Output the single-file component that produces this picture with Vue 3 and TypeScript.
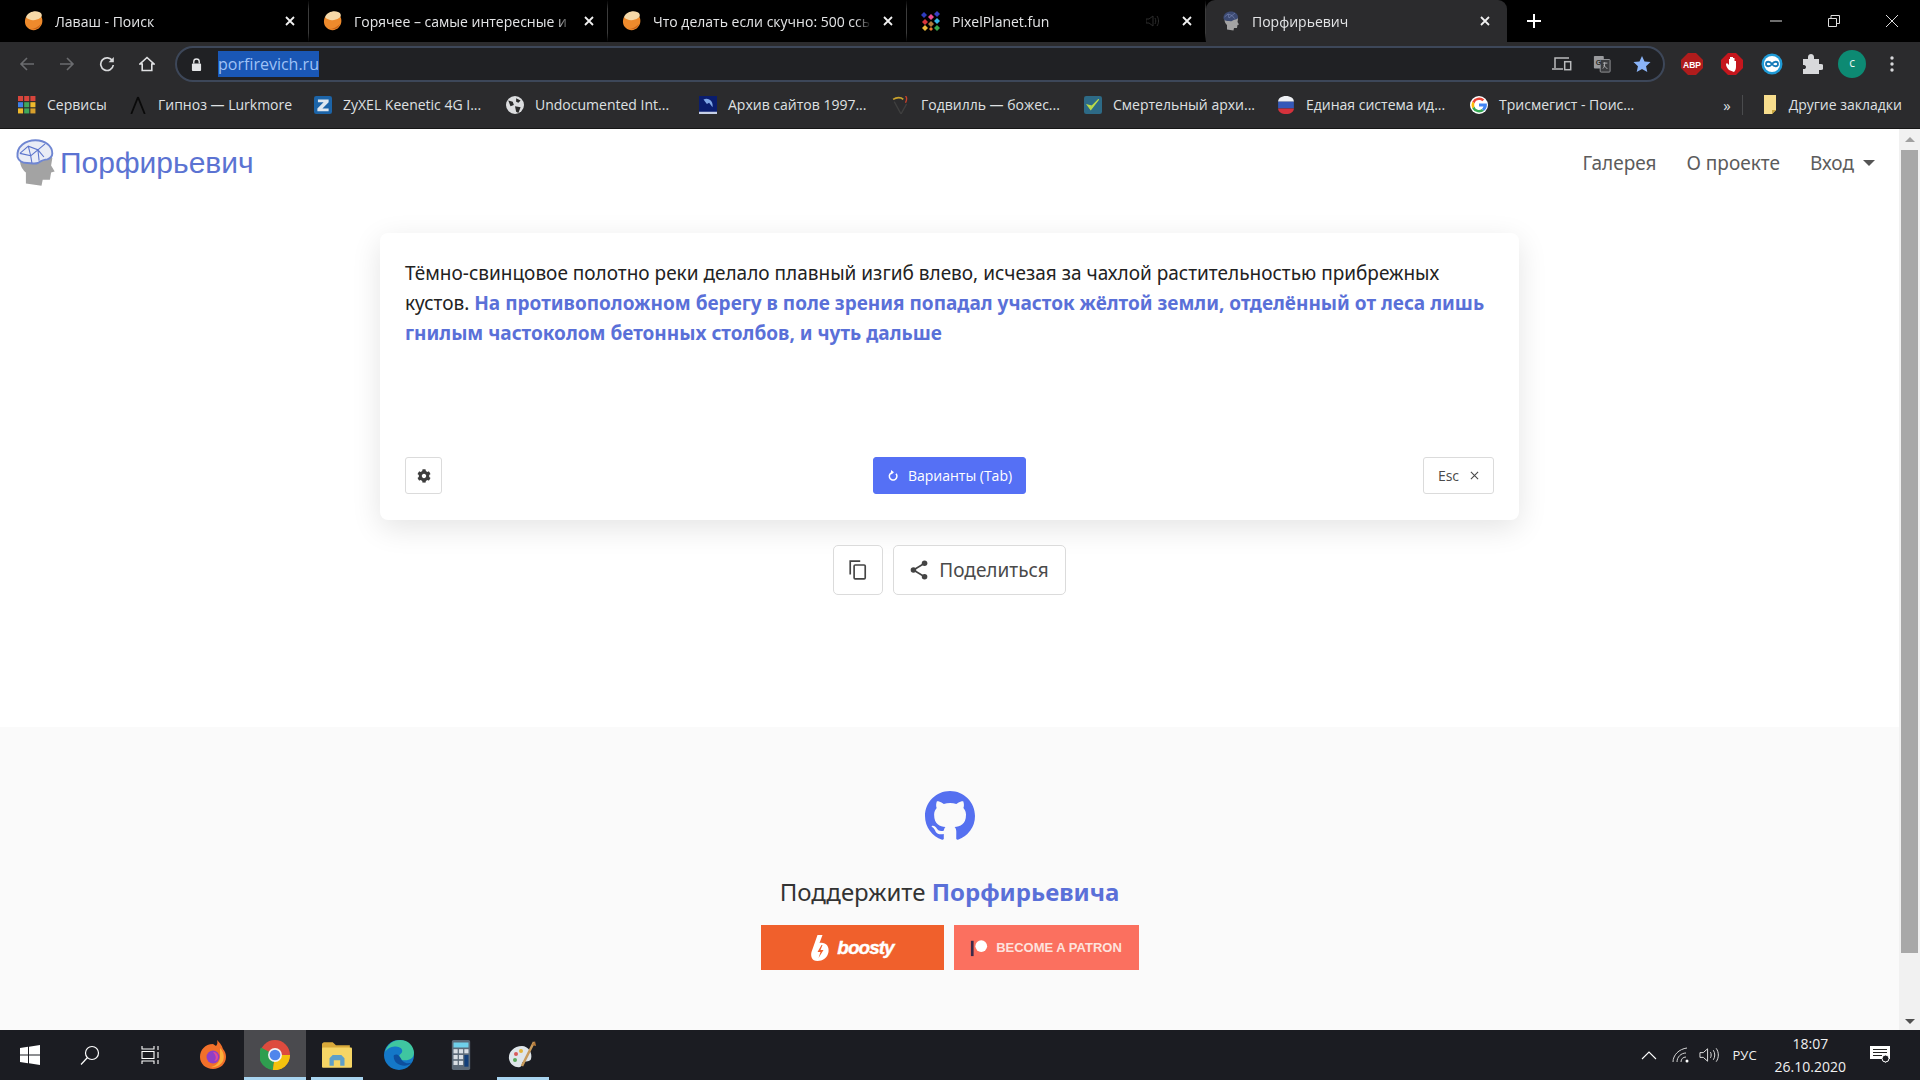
<template>
  <div class="screen">
    <svg class="defs" aria-hidden="true">
      <symbol id="lavash" viewBox="0 0 20 20">
        <path d="M2 6c-2 4-1 9 2 11 3 3 9 3 12-1 3-3 3-8 1-11z" fill="#ee8a2c" />
        <path d="M2 6C4 1 11-1 15 1c3 1 4 4 1 6-4 3-11 3-14-1z" fill="#f6d9a8" />
        <path d="M6 18c4 1 9 0 11-5-3 3-7 5-11 5z" fill="#c9641a" />
      </symbol>
      <symbol id="head" viewBox="1 0 34 40">
        <path d="M5 17c0 6 3 9 5 11v9l13 2 1-5h6l1-6 3-1-3-5 1-6C31 6 6 6 5 17z" fill="#a3a3a3" />
        <path d="M3 15C2 6 10 1 18 1c8 0 14 5 14 11 0 3-2 4-4 5-3 0-5 1-8 3-3 1-6 0-9 0-4 0-7-2-8-5z" fill="#e9ecf6" stroke="#6f86d2" stroke-width="1.6" />
        <path d="M5 12l7-6 8 3 6-5M12 6l2 8 6-5 5 6M5 12l9 2 1 6M20 9l1 9" fill="none" stroke="#5c74cc" stroke-width=".9" />
      </symbol>
      <symbol id="head-dark" viewBox="1 0 34 40">
        <path d="M5 17c0 6 3 9 5 11v9l13 2 1-5h6l1-6 3-1-3-5 1-6C31 6 6 6 5 17z" fill="#a3a3a3" />
        <path d="M3 15C2 6 10 1 18 1c8 0 14 5 14 11 0 3-2 4-4 5-3 0-5 1-8 3-3 1-6 0-9 0-4 0-7-2-8-5z" fill="#3c4a72" />
        <path d="M5 12l7-6 8 3 6-5M12 6l2 8 6-5 5 6" fill="none" stroke="#7d8cb8" stroke-width="1.200" />
      </symbol>
      <symbol id="pixel" viewBox="0 0 20 20">
        <path d="M3 1l3 3-3 3-3-3z" fill="#2e3bbd" />
        <path d="M10 3l3 3-3 3-3-3z" fill="#ef4a8f" />
        <path d="M16 0l3 3-3 3-3-3z" fill="#3a3fc4" />
        <path d="M4 8l3 3-3 3-3-3z" fill="#d8353b" />
        <path d="M16 7l3 3-3 3-3-3z" fill="#37b6e8" />
        <path d="M10 10l3 3-3 3-3-3z" fill="#b07a3a" />
        <path d="M4 14l3 3-3 3-3-3z" fill="#eab93b" />
        <path d="M16 14l3 3-3 3-3-3z" fill="#37a84b" />
        <path d="M10 16l2 2-2 2-2-2z" fill="#e87a2b" />
      </symbol>
      <symbol id="gear" viewBox="0 0 512 512">
        <path d="M487 316l-42-25c4-23 4-47 0-70l42-25c5-3 7-9 5-14-11-35-30-67-54-93-4-4-10-5-15-2l-42 24c-18-15-38-27-60-35V27c0-6-4-11-9-12-37-8-74-8-110 0-5 1-9 6-9 12v49c-22 8-42 20-60 35L91 87c-5-3-11-2-15 2-24 26-43 58-54 93-2 5 0 11 5 14l42 25c-4 23-4 47 0 70l-42 25c-5 3-7 9-5 14 11 35 30 67 54 93 4 4 10 5 15 2l42-24c18 15 38 27 60 35v49c0 6 4 11 9 12 37 8 74 8 110 0 5-1 9-6 9-12v-49c22-8 42-20 60-35l42 24c5 3 11 2 15-2 24-26 43-58 54-93 2-5 0-11-5-14zM256 336c-44 0-80-36-80-80s36-80 80-80 80 36 80 80-36 80-80 80z" fill="currentColor" />
      </symbol>
    </svg>

    <div class="tabbar">
      <div v-for="tab in tabs" :key="tab.title" :class="['tab', tab.active && 'active']">
        <svg class="favicon"><use :href="'#' + tab.icon" /></svg>
        <span class="tab-title">{{ tab.title }}</span>
        <svg v-if="tab.muted" class="tab-audio" viewBox="0 0 14 12"><path d="M0 4h3l4-3v10L3 8H0zM9 3c1 2 1 4 0 6M11 1c2 3 2 7 0 10" fill="none" stroke="#2c2c2c" /></svg>
        <svg class="tab-close" viewBox="0 0 10 10"><path d="M1 1l8 8M9 1l-8 8" stroke="currentColor" stroke-width="1.8" /></svg>
      </div>
      <svg class="new-tab" viewBox="0 0 14 14"><path d="M7 0v14M0 7h14" stroke="#fff" stroke-width="2" /></svg>
      <div class="win-controls">
        <svg viewBox="0 0 12 12"><path d="M0 6h12" stroke="#ddd" /></svg>
        <svg viewBox="0 0 12 12"><path d="M.5 3.500h8v8h-8zM3 3V.5h8.500v8H9" fill="none" stroke="#ddd" /></svg>
        <svg viewBox="0 0 12 12"><path d="M0 0l12 12M12 0L0 12" stroke="#ddd" /></svg>
      </div>
    </div>

    <div class="toolbar">
      <svg class="tb-icon" viewBox="0 0 16 16"><path d="M15 8H2M8 2L2 8l6 6" fill="none" stroke="#6b6c6f" stroke-width="1.600" /></svg>
      <svg class="tb-icon" viewBox="0 0 16 16"><path d="M1 8h13M8 2l6 6-6 6" fill="none" stroke="#6b6c6f" stroke-width="1.600" /></svg>
      <svg class="tb-icon" viewBox="0 0 16 16"><path d="M13.500 5A6.300 6.300 0 1 0 14.300 9" fill="none" stroke="#d8d9db" stroke-width="1.700" /><path d="M14.800 1v5.200H9.600z" fill="#d8d9db" /></svg>
      <svg class="tb-icon" viewBox="0 0 16 16"><path d="M8 1.500L1 8h2.200v6.500h9.600V8H15z" fill="none" stroke="#e0e1e3" stroke-width="1.600" /></svg>
      <div class="omnibox">
        <svg class="lock" viewBox="0 0 12 14"><path d="M3 6V4a3 3 0 0 1 6 0v2" fill="none" stroke="#e4e5e7" stroke-width="1.500" /><rect x="1" y="6" width="10" height="8" rx="1" fill="#e4e5e7" /></svg>
        <span class="url">porfirevich.ru</span>
        <span class="spacer"></span>
        <svg class="omni-icon" viewBox="0 0 20 16"><path d="M17 2H3v10M0 13h11" fill="none" stroke="#b9babc" stroke-width="1.500" /><rect x="12.700" y="5.700" width="6" height="8" fill="none" stroke="#b9babc" stroke-width="1.500" /></svg>
        <svg class="omni-icon" viewBox="0 0 20 20"><rect x="1" y="1" width="11" height="14" rx="1" fill="#9a9b9e" /><rect x="8" y="5" width="11" height="14" rx="1" fill="#3a3b3e" stroke="#9a9b9e" /><text x="3" y="11" font-size="8" font-weight="700" fill="#2b2b2b" font-family="Liberation Sans">G</text><path d="M11 9h5M13 8v1c0 3-1 5-2 6M12 11c1 2 3 4 4 4" fill="none" stroke="#b9babc" /></svg>
        <svg class="omni-icon star" viewBox="0 0 20 20"><path d="M10 1l2.800 6.200 6.700.700-5 4.500 1.400 6.600L10 15.600 4.100 19l1.400-6.600-5-4.500 6.700-.700z" fill="#8ab4f8" /></svg>
      </div>
      <div class="extensions">
        <svg class="ext" viewBox="0 0 22 22"><path d="M7 0h8l7 7v8l-7 7H7l-7-7V7z" fill="#b01c1c" /><text x="11" y="14.500" text-anchor="middle" font-size="8.500" font-weight="700" fill="#fff" font-family="Liberation Sans">ABP</text></svg>
        <svg class="ext" viewBox="0 0 22 22"><path d="M7 0h8l7 7v8l-7 7H7l-7-7V7z" fill="#c5161d" /><path d="M8 17c-2-2-3-4-3-6l1-1 2 2V6h1v4-6h1.500v6-6H12v6-5h1.500v6-3H15v6c0 2-1 4-2 5z" fill="#fff" /></svg>
        <svg class="ext" viewBox="0 0 22 22"><circle cx="11" cy="11" r="10.500" fill="#1f9ad6" /><circle cx="11" cy="11" r="8" fill="#fff" /><path d="M11 11c-2-3-6-3-6 0s4 3 6 0 6-3 6 0-4 3-6 0z" fill="none" stroke="#1479b8" stroke-width="1.800" /></svg>
        <svg class="ext" viewBox="0 0 22 22"><path d="M2 6h5V4c0-4 6-4 6 0v2h5v5h2c4 0 4 6 0 6h-2v4H2v-5c4 1 4-5 0-4z" fill="#d8d9db" /></svg>
        <div class="avatar">c</div>
        <svg class="dots" viewBox="0 0 4 16"><circle cx="2" cy="2" r="1.700" fill="#d8d9db" /><circle cx="2" cy="8" r="1.700" fill="#d8d9db" /><circle cx="2" cy="14" r="1.700" fill="#d8d9db" /></svg>
      </div>
    </div>

    <div class="bookmarks">
      <div v-for="b in bookmarks" :key="b.title" class="bookmark" :style="{ width: b.width + 'px' }">
        <span class="bm-icon">
          <svg v-if="b.icon === 'apps'" viewBox="0 0 16 16">
            <g v-for="(c, i) in appColors" :key="i">
              <rect :x="(i % 3) * 5.500" :y="Math.floor(i / 3) * 5.500" width="4.500" height="4.500" :fill="c" />
            </g>
          </svg>
          <svg v-else-if="b.icon === 'lambda'" viewBox="0 0 16 16"><path d="M8 1L2 16M8 1l6 15" fill="none" stroke="#0a0a0a" stroke-width="1.600" /></svg>
          <svg v-else-if="b.icon === 'z'" viewBox="0 0 16 16"><rect width="16" height="16" rx="2" fill="#1c64a8" /><path d="M3.500 3h9.500v2.500L7.500 11H13v2.500H3v-2.500L8.500 5.500H3.500z" fill="#dfe7ef" /></svg>
          <svg v-else-if="b.icon === 'globe'" viewBox="0 0 16 16"><circle cx="8" cy="8" r="8" fill="#dcdddf" /><path d="M2 4l4 1 1 3-3 1zM9 2l4 2-2 2-2-1zM8 9l5 1-2 5-2-1z" fill="#2b2b2b" /></svg>
          <svg v-else-if="b.icon === 'archive'" viewBox="0 0 16 16"><rect width="16" height="16" fill="#0a1d6e" /><path d="M4 3c5-2 9 2 8 7l-3-4-2 1z" fill="#7fa6e6" /><rect y="14" width="16" height="2" fill="#c7d0e6" /></svg>
          <svg v-else-if="b.icon === 'godville'" viewBox="0 0 16 16"><path d="M1 3c3-2 7-2 9 0" fill="none" stroke="#c9a22c" stroke-width="1.500" /><path d="M12 0c2 2 1 4 0 6" fill="none" stroke="#c8402c" stroke-width="1.200" /><path d="M2 5l6 11 5-9" fill="none" stroke="#3f3f3f" stroke-width="1.200" /></svg>
          <svg v-else-if="b.icon === 'check'" viewBox="0 0 16 16"><rect width="16" height="16" rx="2" fill="#2d6a86" /><path d="M3 8l3 4 7-9-6 6z" fill="#b8d94a" stroke="#b8d94a" /></svg>
          <svg v-else-if="b.icon === 'flag'" viewBox="0 0 16 16"><path d="M1 5c0-3 3-5 7-5s7 2 7 5z" fill="#eef0f4" /><rect x="1" y="5" width="14" height="6" fill="#3558b8" /><path d="M1 11h14c0 3-3 5-7 5s-7-2-7-5z" fill="#d5323c" /></svg>
          <svg v-else viewBox="0 0 16 16"><circle cx="8" cy="8" r="8" fill="#fff" /><path d="M8 3.500c1.200 0 2.200.4 3 1.200l1.700-1.700A7 7 0 0 0 2 5l2 1.500a4.200 4.200 0 0 1 4-3z" fill="#ea4335" /><path d="M2 5a7 7 0 0 0 0 6l2-1.500a4.300 4.300 0 0 1 0-3z" fill="#fbbc05" /><path d="M2 11a7 7 0 0 0 10.600 2l-2-1.500A4.200 4.200 0 0 1 4 9.500z" fill="#34a853" /><path d="M15 8l-.1-1.300H8v2.700h4c-.2.900-.7 1.600-1.400 2.100l2 1.500C14 11.800 15 10 15 8z" fill="#4285f4" /></svg>
        </span>
        <span class="bm-title">{{ b.title }}</span>
      </div>
      <span class="spacer"></span>
      <span class="more">»</span>
      <span class="bm-sep"></span>
      <svg class="folder" viewBox="0 0 14 20"><path d="M1 0h12v15l-4 4H1z" fill="#f7dd8d" /><path d="M9 19l4-4H9z" fill="#c9a53d" /></svg>
      <span class="bm-title other">Другие закладки</span>
    </div>

    <div class="viewport">
      <div class="page">
        <header class="navbar">
          <a class="brand">
            <svg class="brand-logo"><use href="#head" /></svg>
            <span>Порфирьевич</span>
          </a>
          <nav class="nav-links">
            <a>Галерея</a>
            <a>О проекте</a>
            <a class="dropdown">Вход<i class="caret"></i></a>
          </nav>
        </header>

        <main class="main">
          <section class="card">
            <p class="story">Тёмно-свинцовое полотно реки делало плавный изгиб влево, исчезая за чахлой растительностью прибрежных кустов.<b> На противоположном берегу в поле зрения попадал участок жёлтой земли, отделённый от леса лишь гнилым частоколом бетонных столбов, и чуть дальше</b></p>
            <div class="card-actions">
              <button class="btn square"><svg class="gear"><use href="#gear" /></svg></button>
              <button class="btn primary">
                <svg class="sync" viewBox="0 0 12 12"><path d="M6 2.500a3.800 3.800 0 1 0 3 1.300" fill="none" stroke="#fff" stroke-width="1.500" /><path d="M4 0v4.500L7 2.200z" fill="#fff" /></svg>
                Варианты (Tab)
              </button>
              <button class="btn esc">Esc<svg class="x" viewBox="0 0 10 10"><path d="M1 1l8 8M9 1l-8 8" stroke="#4a4a4a" stroke-width="1.200" /></svg></button>
            </div>
          </section>

          <div class="share-row">
            <button class="btn large copy">
              <svg viewBox="0 0 16 18"><path d="M1 13V1h9" fill="none" stroke="#444" stroke-width="1.500" /><rect x="4.500" y="4.500" width="10" height="12.500" rx="1" fill="none" stroke="#444" stroke-width="1.500" /></svg>
            </button>
            <button class="btn large share">
              <svg viewBox="0 0 16 18"><path d="M13 3L3 9l10 6" fill="none" stroke="#444" stroke-width="1.500" /><circle cx="13" cy="3" r="2.500" fill="#444" /><circle cx="3" cy="9" r="2.500" fill="#444" /><circle cx="13" cy="15" r="2.500" fill="#444" /></svg>
              Поделиться
            </button>
          </div>
        </main>

        <footer class="footer">
          <svg class="github" viewBox="0 0 16 16"><path d="M8 0C3.580 0 0 3.580 0 8c0 3.540 2.290 6.530 5.470 7.590.4.070.55-.17.55-.38 0-.19-.01-.82-.01-1.490-2.010.37-2.530-.49-2.690-.94-.09-.23-.48-.94-.82-1.130-.28-.15-.68-.52-.01-.53.630-.01 1.080.58 1.230.82.720 1.210 1.870.87 2.330.66.070-.52.280-.87.510-1.070-1.780-.2-3.640-.89-3.640-3.950 0-.87.310-1.590.820-2.150-.08-.2-.36-1.020.08-2.120 0 0 .67-.21 2.200.82.640-.18 1.320-.27 2-.27.680 0 1.360.09 2 .27 1.530-1.040 2.200-.82 2.200-.82.440 1.100.160 1.920.080 2.120.510.560.820 1.270.820 2.150 0 3.070-1.870 3.750-3.650 3.950.290.250.540.730.540 1.480 0 1.070-.01 1.930-.01 2.200 0 .210.150.460.550.380A8.013 8.013 0 0 0 16 8c0-4.420-3.580-8-8-8z" fill="#5570f0" /></svg>
          <h2 class="support">Поддержите <b>Порфирьевича</b></h2>
          <div class="donate">
            <a class="boosty">
              <svg viewBox="0 0 20 26"><path d="M7 0h5L9 8c6-1 10 3 9 9-1 6-6 9-11 9-6 0-7-5-6-9z" fill="#fff" /><path d="M11 10l-4 7h3l-2 6 5-8h-3l2-5z" fill="#f15f2c" /></svg>
              <span>boosty</span>
            </a>
            <a class="patron">
              <svg viewBox="0 0 20 20"><rect x="1" y="2" width="3" height="17" fill="#3a2a4a" /><circle cx="12.500" cy="8" r="6.500" fill="#fff" /></svg>
              <span>BECOME A PATRON</span>
            </a>
          </div>
        </footer>
      </div>

      <div class="scrollbar">
        <i class="arrow up"></i>
        <div class="thumb"></div>
        <i class="arrow down"></i>
      </div>
    </div>

    <div class="taskbar">
      <div class="task win"><svg viewBox="0 0 20 20"><path d="M0 3l8-1.200V9.500H0zM9 1.700L20 0v9.500H9zM0 10.500h8v7.700L0 17zM9 10.500h11V20L9 18.300z" fill="#fff" /></svg></div>
      <div class="task"><svg viewBox="0 0 20 20"><circle cx="12" cy="8" r="6.500" fill="none" stroke="#fff" stroke-width="1.200" /><path d="M7.500 12.500L1 19.500" stroke="#fff" stroke-width="1.200" /></svg></div>
      <div class="task"><svg viewBox="0 0 20 20"><path d="M1 1v3h12V1M1 19v-3h12v3M1 6.500h12v7H1zM17 1v4M17 7v6M17 15v4" fill="none" stroke="#fff" stroke-width="1.100" /></svg></div>
      <div class="task app first"><svg viewBox="0 0 28 30"><path d="M14 4C6 4 1 10 1 17c0 7 6 12 13 12s13-5 13-12c0-3-1-6-3-8-1-4-4-7-6-9 1 3 0 5-1 6z" fill="#f2702a" /><path d="M21 8c3 3 5 8 3 13-2 4-8 7-12 6 5-1 9-5 9-10z" fill="#fbb03a" /><circle cx="14" cy="17" r="6.500" fill="#8f3fc7" /><path d="M14 12c3 0 5 2 5 5s-2 4-4 4c3-2 2-6-1-9z" fill="#e0489a" /></svg></div>
      <div class="task app running chrome"><svg viewBox="0 0 28 28"><circle cx="14" cy="14" r="14" fill="#dd4b3e" /><path d="M14 14L1 7a14 14 0 0 0 11 21z" fill="#2f9e4f" /><path d="M14 14h14a14 14 0 0 1-16 14z" fill="#f4c20d" /><circle cx="14" cy="14" r="6.500" fill="#f3f3f3" /><circle cx="14" cy="14" r="5" fill="#4f86ec" /></svg></div>
      <div class="task app running"><svg viewBox="0 0 28 26"><path d="M0 3c0-1 1-2 2-2h8l3 3h13v5H0z" fill="#d9a93a" /><rect y="6" width="28" height="19" rx="1" fill="#f6d565" /><path d="M7 23v-7l3-3h8l3 3v7h-4v-5h-6v5z" fill="#5e9fc9" /></svg></div>
      <div class="task app"><svg viewBox="0 0 28 28"><circle cx="14" cy="14" r="14" fill="#1478c8" /><path d="M1 11C3 4 9 0 15 0c8 0 13 6 13 12 0 5-4 7-8 7-3 0-6-1-6-3 0-3 3-3 3-6 0-3-4-4-7-4-4 0-7 2-9 5z" fill="#3fc6a0" /><path d="M9 15c0 6 5 9 10 9 2 0 5-1 7-3-3 1-6 1-8-1-2-1-2-4-5-6-2-1-4 0-4 1z" fill="#0d4f9e" /></svg></div>
      <div class="task app"><svg viewBox="0 0 22 36"><rect width="22" height="36" rx="2" fill="#5c6a78" /><rect x="2" y="3" width="18" height="6" fill="#6fd0ea" /><g fill="#d8dee4"><rect x="2" y="11" width="5" height="5" /><rect x="8.500" y="11" width="5" height="5" /><rect x="15" y="11" width="5" height="5" /><rect x="2" y="18" width="5" height="5" /><rect x="8.500" y="18" width="5" height="5" /><rect x="2" y="25" width="5" height="5" /><rect x="8.500" y="25" width="5" height="5" /></g><rect x="15" y="18" width="5" height="14" fill="#123f7a" /></svg></div>
      <div class="task app running"><svg viewBox="0 0 30 30"><path d="M14 6C6 6 0 12 1 19c1 6 7 9 11 8 3-1 1-4 3-5 3-1 7 0 8-3 2-6-3-13-9-13z" fill="#dfe5ea" /><circle cx="8" cy="14" r="2" fill="#d95a5a" /><circle cx="13" cy="11" r="2" fill="#e4b43a" /><circle cx="7" cy="20" r="2" fill="#5ca85c" /><path d="M14 26L26 2" stroke="#c79a5c" stroke-width="2.500" /><path d="M24 5l3-4 1 5z" fill="#b77a3a" /></svg></div>
      <span class="spacer"></span>
      <div class="tray">
        <svg class="tray-up" viewBox="0 0 16 9"><path d="M1 8l7-7 7 7" fill="none" stroke="#fff" stroke-width="1.100" /></svg>
        <svg class="tray-wifi" viewBox="0 0 18 16"><path d="M1 15C1 8 7 2 15 1M5 15c0-5 4-9 9-9M9 15c0-3 2-5 5-5" fill="none" stroke="#d5d5d5" stroke-width="1" /><circle cx="15" cy="14" r="1.500" fill="#fff" /></svg>
        <svg class="tray-vol" viewBox="0 0 22 16"><path d="M1 5.500h3.500L9 1.500v13l-4.500-4H1z" fill="none" stroke="#e5e5e5" /><path d="M12 5c1 2 1 4 0 6M15 3c2 3 2 7 0 10M18 1c3 4 3 10 0 14" fill="none" stroke="#e5e5e5" /></svg>
        <span class="lang">РУС</span>
        <div class="clock"><span>18:07</span><span>26.10.2020</span></div>
        <svg class="notify" viewBox="0 0 20 18"><path d="M0 0h20v13h-4v4l-4-4H0z" fill="#fff" /><path d="M3 3.500h14M3 6.500h14M3 9.500h9" stroke="#222" stroke-width="1" /><circle cx="15.500" cy="12.500" r="3.500" fill="#1c1d22" stroke="#fff" /></svg>
      </div>
    </div>
  </div>
</template>

<script setup lang="ts">
interface Tab {
  title: string
  icon: string
  active?: boolean
  muted?: boolean
}

interface Bookmark {
  title: string
  icon: string
  width: number
}

const tabs: Tab[] = [
  { title: 'Лаваш - Поиск', icon: 'lavash' },
  { title: 'Горячее – самые интересные и', icon: 'lavash' },
  { title: 'Что делать если скучно: 500 ссь', icon: 'lavash' },
  { title: 'PixelPlanet.fun', icon: 'pixel', muted: true },
  { title: 'Порфирьевич', icon: 'head-dark', active: true }
]

const bookmarks: Bookmark[] = [
  { title: 'Сервисы', icon: 'apps', width: 111 },
  { title: 'Гипноз — Lurkmore', icon: 'lambda', width: 185 },
  { title: 'ZyXEL Keenetic 4G I...', icon: 'z', width: 192 },
  { title: 'Undocumented Int...', icon: 'globe', width: 193 },
  { title: 'Архив сайтов 1997...', icon: 'archive', width: 193 },
  { title: 'Годвилль — божес...', icon: 'godville', width: 192 },
  { title: 'Смертельный архи...', icon: 'check', width: 193 },
  { title: 'Единая система ид...', icon: 'flag', width: 193 },
  { title: 'Трисмегист - Поис...', icon: 'g', width: 190 }
]

const appColors = ['#d8453c', '#d8453c', '#d8453c', '#3f80e8', '#3fa85c', '#f0b92c', '#f0b92c', '#3fa85c', '#d8a02c']
</script>

<style>
html,
body {
  margin: 0;
  overflow: hidden;
}
</style>

<style scoped>
.screen {
  width: 1920px;
  height: 1080px;
  display: flex;
  flex-direction: column;
  overflow: hidden;
  font-family: "Open Sans", "Noto Sans", sans-serif;
  color: #222;
  background: #fff;
}

.defs {
  position: absolute;
  width: 0;
  height: 0;
}

.spacer {
  flex: 1;
}

/* browser chrome */
.tabbar {
  height: 42px;
  flex: none;
  display: flex;
  align-items: stretch;
  background: #000;
  padding-left: 10px;
}

.tab {
  width: 299px;
  box-sizing: border-box;
  display: flex;
  align-items: center;
  padding: 0 13px 0 14px;
  color: #e4e5e7;
  font-size: 14px;
  border-right: 1px solid #3c3c3c;
  border-top: 9px solid #000;
  border-bottom: 9px solid #000;
}

.tab:nth-last-of-type(2) {
  border-right: 0;
}

.tab.active {
  width: 301px;
  background: #2b2b2d;
  border: 0;
  border-radius: 9px 9px 0 0;
  padding: 0 17px 0 15px;
}

.favicon {
  width: 20px;
  height: 20px;
  flex: none;
  margin-right: 11px;
}

.tab-title {
  flex: 1;
  white-space: nowrap;
  overflow: hidden;
  -webkit-mask-image: linear-gradient(to right, #000 93%, transparent);
  mask-image: linear-gradient(to right, #000 93%, transparent);
}

.tab-audio {
  width: 14px;
  height: 12px;
  flex: none;
  margin-right: 10px;
}

.tab-close {
  width: 10px;
  height: 10px;
  flex: none;
  margin-left: 12px;
  color: #f1f1f1;
}

.new-tab {
  width: 14px;
  height: 14px;
  margin: 14px 0 0 20px;
}

.win-controls {
  margin-left: auto;
  display: flex;
  align-items: center;
  gap: 46px;
  padding-right: 22px;
}

.win-controls svg {
  width: 12px;
  height: 12px;
}

.toolbar {
  height: 44px;
  flex: none;
  display: flex;
  align-items: center;
  background: #2b2b2d;
  padding-left: 19px;
  gap: 24px;
}

.tb-icon {
  width: 16px;
  height: 16px;
  flex: none;
}

.omnibox {
  width: 1490px;
  height: 36px;
  box-sizing: border-box;
  margin-left: -4px;
  display: flex;
  align-items: center;
  border: 2px solid #3d4759;
  border-radius: 18px;
  background: #202124;
  padding: 0 11px 0 14px;
}

.lock {
  width: 11px;
  height: 13px;
  flex: none;
  margin-right: 16px;
}

.url {
  background: #1a57b5;
  color: #9fc2f7;
  font-size: 16px;
  line-height: 26px;
}

.omni-icon {
  width: 20px;
  height: 18px;
  margin-left: 20px;
}

.extensions {
  display: flex;
  align-items: center;
  gap: 18px;
  margin-left: -8px;
}

.ext {
  width: 22px;
  height: 22px;
}

.avatar {
  width: 28px;
  height: 28px;
  border-radius: 50%;
  background: #0d8a73;
  color: #e8f5f2;
  font-size: 12px;
  line-height: 26px;
  text-align: center;
  margin: 0 -3px;
}

.dots {
  width: 4px;
  height: 16px;
  margin-left: 9px;
}

.bookmarks {
  height: 43px;
  flex: none;
  box-sizing: border-box;
  display: flex;
  align-items: center;
  background: #2b2b2d;
  padding: 0 18px 5px 18px;
  border-bottom: 1px solid #161616;
  color: #dfe0e2;
  font-size: 14px;
}

.bookmark {
  flex: none;
  display: flex;
  align-items: center;
  gap: 11px;
  white-space: nowrap;
}

.bm-icon {
  width: 18px;
  height: 18px;
  flex: none;
}

.bm-icon svg {
  display: block;
  width: 18px;
  height: 18px;
}

.more {
  font-size: 15px;
  margin-right: 11px;
}

.bm-sep {
  width: 1px;
  height: 20px;
  background: #4a4b4d;
  margin-right: 20px;
}

.folder {
  width: 14px;
  height: 20px;
  margin-right: 12px;
}

/* page */
.viewport {
  flex: 1;
  min-height: 0;
  display: flex;
}

.page {
  flex: 1;
  min-width: 0;
  display: flex;
  flex-direction: column;
}

.navbar {
  height: 68px;
  flex: none;
  box-sizing: border-box;
  display: flex;
  align-items: center;
  justify-content: space-between;
  padding: 0 24px 0 15px;
}

.brand {
  display: flex;
  align-items: center;
  gap: 4px;
  font-family: "Liberation Sans", Arial, sans-serif;
  font-size: 30px;
  color: #5b73d2;
}

.brand-logo {
  width: 41px;
  height: 48px;
}

.nav-links {
  display: flex;
  gap: 30px;
  font-family: "Noto Sans", sans-serif;
  font-size: 19px;
  color: #5c5c5c;
}

.dropdown {
  display: flex;
  align-items: center;
}

.caret {
  width: 0;
  height: 0;
  margin-left: 9px;
  border-left: 6px solid transparent;
  border-right: 6px solid transparent;
  border-top: 6px solid #555;
}

.main {
  height: 530px;
  flex: none;
  box-sizing: border-box;
  padding-top: 36px;
  display: flex;
  flex-direction: column;
  align-items: center;
}

.card {
  width: 1139px;
  height: 287px;
  box-sizing: border-box;
  padding: 25px 25px 26px;
  display: flex;
  flex-direction: column;
  justify-content: space-between;
  border-radius: 8px;
  background: #fff;
  box-shadow: 0 8px 30px rgba(0, 0, 0, 0.11);
}

.story {
  margin: 0;
  font-family: "Noto Sans", sans-serif;
  font-size: 19px;
  line-height: 30px;
  color: #222;
}

.story b {
  color: #5a70d8;
  font-weight: 700;
}

.card-actions {
  display: grid;
  grid-template-columns: 1fr auto 1fr;
  align-items: center;
}

.btn {
  height: 37px;
  box-sizing: border-box;
  display: inline-flex;
  align-items: center;
  justify-content: center;
  font-family: inherit;
  font-size: 14px;
  color: #4a4a4a;
  background: #fff;
  border: 1px solid #dbdbdb;
  border-radius: 3px;
  padding: 0;
}

.square {
  width: 37px;
}

.gear {
  width: 14px;
  height: 14px;
  color: #3d3d3d;
}

.primary {
  width: 153px;
  background: #5570f5;
  border-color: #5570f5;
  color: #fff;
  gap: 9px;
}

.sync {
  width: 12px;
  height: 12px;
}

.esc {
  width: 71px;
  gap: 11px;
  justify-self: end;
}

.x {
  width: 9px;
  height: 9px;
}

.share-row {
  display: flex;
  gap: 10px;
  margin-top: 25px;
}

.large {
  height: 50px;
  font-family: "Noto Sans", sans-serif;
  font-size: 19px;
  border-radius: 5px;
}

.large svg {
  width: 18px;
  height: 20px;
}

.copy {
  width: 50px;
}

.share {
  width: 173px;
  gap: 11px;
}

.footer {
  flex: 1;
  min-height: 0;
  box-sizing: border-box;
  padding-top: 64px;
  display: flex;
  flex-direction: column;
  align-items: center;
  background: #fafafa;
}

.github {
  width: 50px;
  height: 50px;
}

.support {
  margin: 29px 0 0;
  font-family: "Noto Sans", sans-serif;
  font-size: 24px;
  line-height: 44px;
  font-weight: 400;
  color: #333;
}

.support b {
  color: #5a70d8;
  font-weight: 700;
}

.donate {
  display: flex;
  gap: 10px;
  margin-top: 11px;
}

.donate a {
  height: 45px;
  display: flex;
  align-items: center;
  justify-content: center;
  color: #fff;
}

.boosty {
  width: 183px;
  background: #f0602c;
  gap: 6px;
}

.boosty svg {
  width: 21px;
  height: 26px;
}

.boosty span {
  font-family: "Liberation Sans", sans-serif;
  font-size: 19px;
  font-weight: 700;
  font-style: italic;
  letter-spacing: -1px;
  -webkit-text-stroke: 0.4px #fff;
}

.patron {
  width: 185px;
  background: #fb705f;
  gap: 8px;
}

.patron svg {
  width: 18px;
  height: 18px;
}

.patron span {
  font-family: "Liberation Sans", sans-serif;
  font-size: 13px;
  font-weight: 700;
  color: #fde2dd;
}

.scrollbar {
  width: 21px;
  flex: none;
  display: flex;
  flex-direction: column;
  align-items: center;
  background: #f1f1f1;
}

.thumb {
  width: 17px;
  height: 803px;
  background: #a8a8a8;
}

.arrow {
  width: 0;
  height: 0;
  border-left: 5px solid transparent;
  border-right: 5px solid transparent;
}

.arrow.up {
  margin: 8px 0 8px;
  border-bottom: 5px solid #a0a0a0;
}

.arrow.down {
  margin: auto 0 6px;
  border-top: 5px solid #505050;
}

/* windows taskbar */
.taskbar {
  height: 50px;
  flex: none;
  display: flex;
  align-items: stretch;
  background: #1b1c22;
  padding-left: 5px;
  color: #f0f0f0;
}

.task {
  width: 61px;
  box-sizing: border-box;
  display: flex;
  align-items: center;
  justify-content: center;
  position: relative;
}

.task svg {
  width: 20px;
  height: 20px;
}

.task.win {
  width: 50px;
}

.task.win + .task {
  margin-left: 4px;
}

.task.app {
  width: 62px;
}

.task.first {
  margin-left: 1px;
}

.task.app svg {
  width: 30px;
  height: 30px;
}

.task.running::after {
  content: "";
  position: absolute;
  left: 5px;
  right: 5px;
  bottom: 0;
  height: 3px;
  background: #a8d4f0;
}

.chrome {
  background: #4a4a4e;
}

.chrome.running::after {
  left: 0;
  right: 0;
}

.tray {
  display: flex;
  align-items: center;
  padding-right: 30px;
}

.tray-up {
  width: 16px;
  height: 9px;
  margin-right: 15px;
}

.tray-wifi {
  width: 18px;
  height: 16px;
  margin-right: 9px;
}

.tray-vol {
  width: 21px;
  height: 16px;
  margin-right: 13px;
}

.lang {
  font-size: 13px;
  margin-right: 18px;
}

.clock {
  display: flex;
  flex-direction: column;
  align-items: center;
  font-size: 14px;
  line-height: 23px;
  margin-right: 24px;
}

.notify {
  width: 20px;
  height: 18px;
}
</style>
